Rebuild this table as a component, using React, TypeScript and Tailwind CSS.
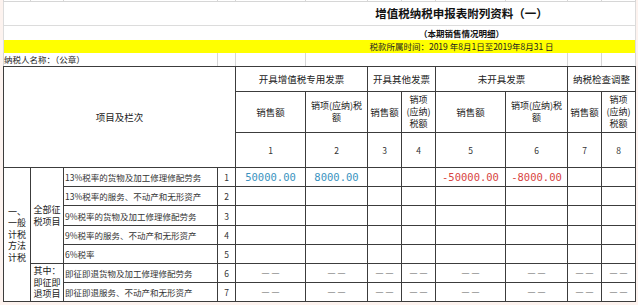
const cols = "grid-cols-[26px_32px_153px_17px_69px_61px_33px_33px_69px_61px_33px_33px]";

const rowLabels = [
  "13%税率的货物及加工修理修配劳务",
  "13%税率的服务、不动产和无形资产",
  "9%税率的货物及加工修理修配劳务",
  "9%税率的服务、不动产和无形资产",
  "6%税率",
  "即征即退货物及加工修理修配劳务",
  "即征即退服务、不动产和无形资产",
];

const blue = "text-[#3a93c0]";
const red = "text-[#d8453f]";

const firstRow: { text: string; color: string }[] = [
  { text: "50000.00", color: blue },
  { text: "8000.00", color: blue },
  { text: "", color: "" },
  { text: "", color: "" },
  { text: "-50000.00", color: red },
  { text: "-8000.00", color: red },
  { text: "", color: "" },
  { text: "", color: "" },
];

const Cell = ({ className = "", children }: { className?: string; children?: React.ReactNode }) => (
  <div className={`flex items-center justify-center bg-white text-center ${className}`}>{children}</div>
);

const Dash = () => (
  <Cell className="text-[10px] text-[#8c8c8c]">－－</Cell>
);

const Num = ({ n }: { n: number }) => <Cell className="text-[8.5px] text-[#333]">{n}</Cell>;

// two-line "销项(应纳)税 / 额" and three-line "销项 / (应纳) / 税额"
const TaxWide = ({ bg }: { bg: string }) => (
  <Cell className={`${bg} text-[9px] leading-[12px]`}>
    销项(应纳)税
    <br />额
  </Cell>
);

const TaxNarrow = () => (
  <Cell className="text-[9px] leading-[12px]">
    销项
    <br />
    (应纳)
    <br />
    税额
  </Cell>
);

export default function App() {
  return (
    <div
      className="w-[638px] h-[305px] overflow-hidden bg-[#fdf3ef] text-[#222]"
      style={{ fontFamily: '"Noto Sans CJK SC", "Noto Sans", sans-serif' }}
    >
      <div className="ml-[3px] w-[633px]">
        {/* sheet gridline strip */}
        <div className={`grid ${cols} h-[2px] gap-x-px bg-[#d6d6d6] px-px pb-px`}>
          {Array.from({ length: 12 }).map((_, i) => (
            <div key={i} className="bg-white" />
          ))}
        </div>

        <div className="flex h-[24px] items-center justify-center border-x border-b border-[#dcdcdc] bg-white pl-[284px] text-[11.5px] font-bold text-[#111]">
          增值税纳税申报表附列资料（一）
        </div>
        <div className="flex h-[14px] items-center justify-center border-x border-[#dcdcdc] bg-white pl-[284px] text-[8.5px] font-bold text-[#111]">
          （本期销售情况明细）
        </div>
        <div className="flex h-[13px] items-center justify-center border-x border-[#dcdcdc] bg-[#ffff00] pl-[284px] text-[8.5px] text-[#222]">
          税款所属时间：2019 年8月1日至2019年8月31 日
        </div>

        <div className={`grid ${cols} h-[13px] gap-x-px bg-[#d6d6d6] px-px`}>
          <div className="col-span-3 flex items-center bg-white text-[8.5px] text-[#222]">纳税人名称：（公章）</div>
          <div className="bg-white" />
          <div className="bg-white" />
          <div className="col-span-5 bg-white" />
          <div className="bg-white" />
          <div className="bg-white" />
        </div>

        {/* report table */}
        <div
          className={`grid ${cols} grid-rows-[24px_40px_34px_18px_18px_19px_18px_18px_18px_18px] gap-px bg-[#3c3c3c] p-px text-[9.5px] leading-[12px]`}
        >
          <Cell className="col-span-4 row-span-3">项目及栏次</Cell>
          <Cell className="col-span-2 bg-[#ffc000]">开具增值税专用发票</Cell>
          <Cell className="col-span-2">开具其他发票</Cell>
          <Cell className="col-span-2 bg-[#ffff00]">未开具发票</Cell>
          <Cell className="col-span-2">纳税检查调整</Cell>

          <Cell className="bg-[#ffc000]">销售额</Cell>
          <TaxWide bg="bg-[#ffc000]" />
          <Cell>销售额</Cell>
          <TaxNarrow />
          <Cell className="bg-[#ffff00]">销售额</Cell>
          <TaxWide bg="bg-[#ffff00]" />
          <Cell>销售额</Cell>
          <TaxNarrow />

          {[1, 2, 3, 4, 5, 6, 7, 8].map((n) => (
            <Num key={n} n={n} />
          ))}

          {/* row 1 */}
          <Cell className="row-span-7 text-[9px] leading-[11.5px]">
            一、
            <br />
            一般
            <br />
            计税
            <br />
            方法
            <br />
            计税
          </Cell>
          <Cell className="row-span-5 text-[9px] leading-[11.5px]">
            全部征
            <br />
            税项目
          </Cell>
          <div className="flex items-center bg-white pl-px text-[8.5px] text-[#333]">{rowLabels[0]}</div>
          <Num n={1} />
          {firstRow.map((c, i) => (
            <Cell key={i} className={`text-[10.5px] ${c.color}`}>
              <span style={{ fontFamily: '"DejaVu Sans Mono", monospace' }}>{c.text}</span>
            </Cell>
          ))}

          {/* rows 2-5 */}
          {[1, 2, 3, 4].map((r) => (
            <div key={r} className="contents">
              <div className="flex items-center bg-white pl-px text-[8.5px] text-[#333]">{rowLabels[r]}</div>
              <Num n={r + 1} />
              {Array.from({ length: 8 }).map((_, i) => (
                <div key={i} className="bg-white" />
              ))}
            </div>
          ))}

          {/* rows 6-7 */}
          <Cell className="row-span-2 text-[9px] leading-[11.5px]">
            其中：
            <br />
            即征即
            <br />
            退项目
          </Cell>
          {[5, 6].map((r) => (
            <div key={r} className="contents">
              <div className="flex items-center bg-white pl-px text-[8.5px] text-[#333]">{rowLabels[r]}</div>
              <Num n={r + 1} />
              {Array.from({ length: 8 }).map((_, i) => (
                <Dash key={i} />
              ))}
            </div>
          ))}
        </div>
      </div>
    </div>
  );
}
